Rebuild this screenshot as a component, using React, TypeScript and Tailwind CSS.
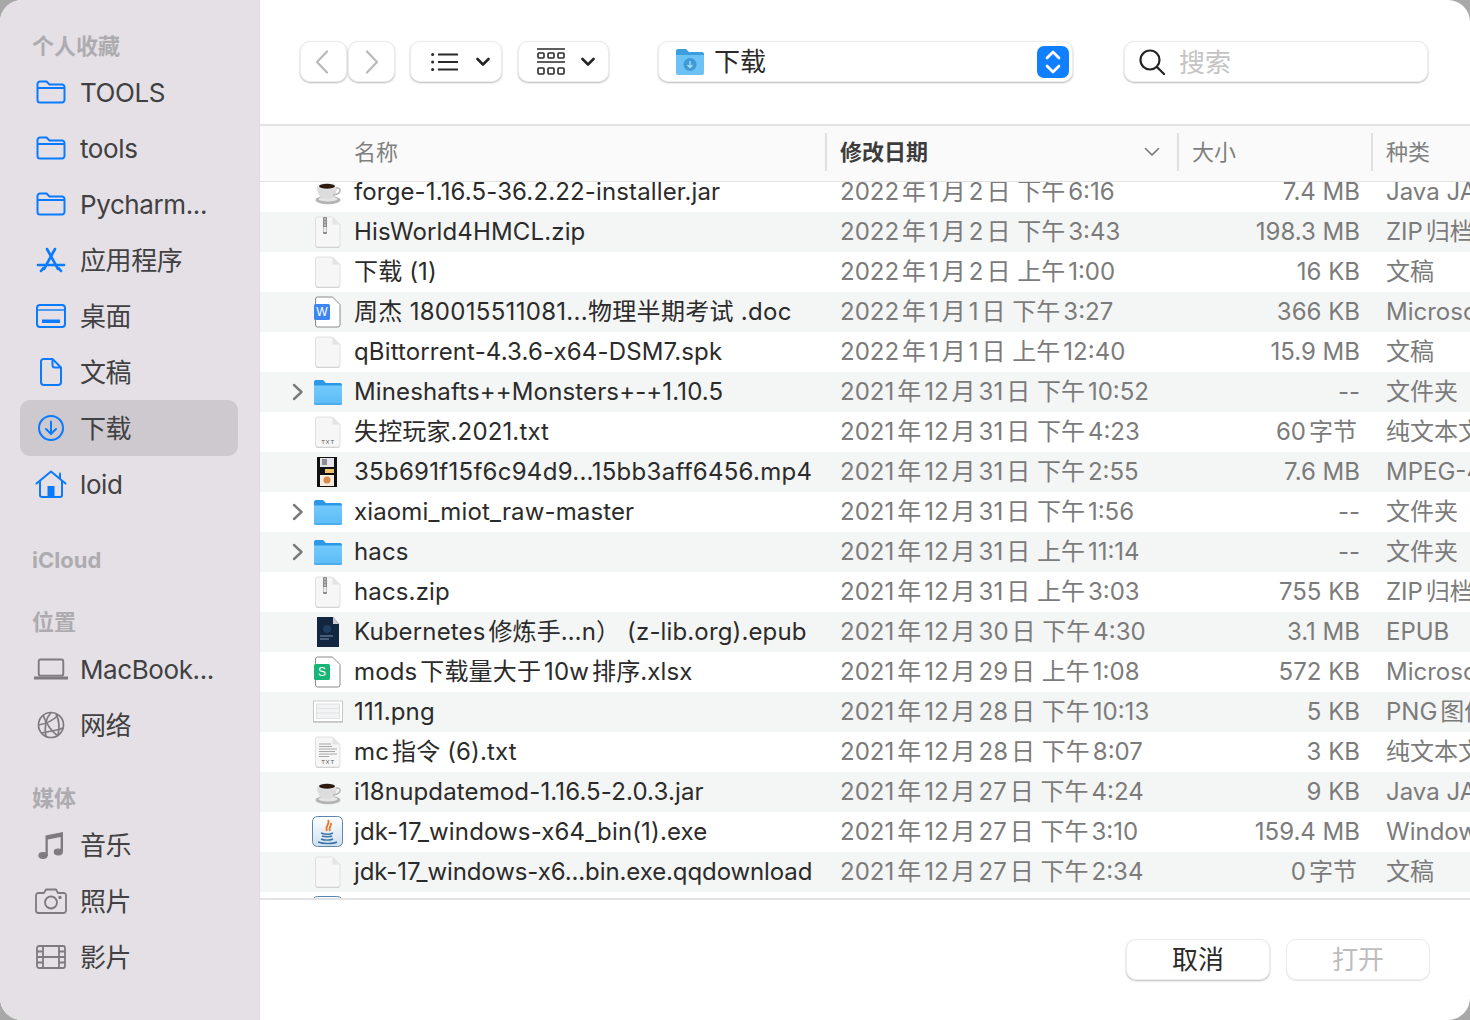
import type { ReactNode } from 'react';

const BLUE = '#0a7aff';
const GRAY = '#7d7b7f';

type IconProps = { color: string };

const FolderLine = ({ color }: IconProps) => (
  <svg width="30" height="24" viewBox="0 0 30 24" fill="none" stroke={color} strokeWidth="2" strokeLinejoin="round">
    <path d="M1.500 20V4a2.500 2.500 0 0 1 2.500-2.500h6.500l3 3H26a2.500 2.500 0 0 1 2.500 2.500v13a2.500 2.500 0 0 1-2.500 2.500H4A2.500 2.500 0 0 1 1.500 20z" />
    <path d="M1.500 8h27" />
  </svg>
);

const AppsIcon = ({ color }: IconProps) => (
  <svg width="30" height="26" viewBox="0 0 30 26" fill="none" stroke={color} strokeWidth="2.600" strokeLinecap="round">
    <path d="M11 2l11 20" />
    <path d="M19 2L8 22" />
    <path d="M2 18h26" />
    <path d="M5 24l2-2.500" />
    <path d="M25 24l-2-2.500" />
  </svg>
);

const DesktopIcon = ({ color }: IconProps) => (
  <svg width="30" height="24" viewBox="0 0 30 24" fill="none" stroke={color} strokeWidth="2">
    <rect x="1" y="1" width="28" height="22" rx="3" />
    <path d="M1 6h28" strokeWidth="1.400" />
    <rect x="6" y="15.500" width="18" height="3.500" fill={color} stroke="none" />
  </svg>
);

const DocLine = ({ color }: IconProps) => (
  <svg width="22" height="28" viewBox="0 0 22 28" fill="none" stroke={color} strokeWidth="2" strokeLinejoin="round">
    <path d="M3.500 1h9L21 9.500V24a3 3 0 0 1-3 3H4a3 3 0 0 1-3-3V3.500A2.500 2.500 0 0 1 3.500 1z" />
    <path d="M12.500 1v6a2.500 2.500 0 0 0 2.500 2.500h6" />
  </svg>
);

const DownloadIcon = ({ color }: IconProps) => (
  <svg width="28" height="28" viewBox="0 0 28 28" fill="none" stroke={color} strokeWidth="2" strokeLinecap="round" strokeLinejoin="round">
    <circle cx="14" cy="14" r="12" />
    <path d="M14 7.500v12" />
    <path d="M9 15l5 5 5-5" />
  </svg>
);

const HomeIcon = ({ color }: IconProps) => (
  <svg width="32" height="28" viewBox="0 0 32 28" fill="none" stroke={color} strokeWidth="2" strokeLinecap="round" strokeLinejoin="round">
    <path d="M1.500 13.500L16 1.500l14.500 12" />
    <path d="M5 11v14a2 2 0 0 0 2 2h18a2 2 0 0 0 2-2V11" />
    <path d="M25 3.500V8" />
    <rect x="12.500" y="16" width="7" height="11" fill={color} stroke="none" />
  </svg>
);

const LaptopIcon = ({ color }: IconProps) => (
  <svg width="36" height="22" viewBox="0 0 36 22" fill="none" stroke={color} strokeWidth="2">
    <rect x="5" y="1" width="26" height="17" rx="2" />
    <path d="M0 20.500h36" strokeWidth="3" strokeLinecap="round" />
  </svg>
);

const GlobeIcon = ({ color }: IconProps) => (
  <svg width="28" height="28" viewBox="0 0 28 28" fill="none" stroke={color} strokeWidth="1.700">
    <circle cx="14" cy="14" r="12.500" />
    <path d="M6 4c3 8 8 16 15 21" />
    <path d="M14 1.500C9 7 7 15 9 26" />
    <path d="M1.500 14c7-1 15-5 20-10" />
    <path d="M5 22c7-2 14-2 21-5" />
    <path d="M19 3c3 6 4 13 2 21" />
  </svg>
);

const MusicIcon = ({ color }: IconProps) => (
  <svg width="26" height="28" viewBox="0 0 26 28" fill={color}>
    <path d="M7.500 4.500L25 1v20h-2.400V6L9.800 8.600V25H7.500z" />
    <ellipse cx="5" cy="24.500" rx="4.600" ry="3.400" />
    <ellipse cx="20.300" cy="21" rx="4.600" ry="3.400" />
  </svg>
);

const CameraIcon = ({ color }: IconProps) => (
  <svg width="32" height="26" viewBox="0 0 32 26" fill="none" stroke={color} strokeWidth="1.800" strokeLinejoin="round">
    <path d="M3.500 5H9l2-3.500h10L23 5h5.500A2.500 2.500 0 0 1 31 7.500v15a2.500 2.500 0 0 1-2.500 2.500h-25A2.500 2.500 0 0 1 1 22.500v-15A2.500 2.500 0 0 1 3.500 5z" />
    <circle cx="16" cy="14.500" r="6" />
    <circle cx="25" cy="9.500" r="0.800" fill={color} />
  </svg>
);

const FilmIcon = ({ color }: IconProps) => (
  <svg width="30" height="24" viewBox="0 0 30 24" fill="none" stroke={color} strokeWidth="1.800">
    <rect x="1" y="1" width="28" height="22" rx="2" />
    <path d="M7 1v22M23 1v22M7 12h16M1 6.500h6M1 12h6M1 17.500h6M23 6.500h6M23 12h6M23 17.500h6" />
  </svg>
);

const sections: { title: string; gap: string; titleGap: string; items: { label: string; icon: ReactNode; active?: boolean }[] }[] = [
  {
    title: '个人收藏',
    gap: 'mt-0',
    titleGap: 'mb-[1px]',
    items: [
      { label: 'TOOLS', icon: <FolderLine color={BLUE} /> },
      { label: 'tools', icon: <FolderLine color={BLUE} /> },
      { label: 'Pycharm...', icon: <FolderLine color={BLUE} /> },
      { label: '应用程序', icon: <AppsIcon color={BLUE} /> },
      { label: '桌面', icon: <DesktopIcon color={BLUE} /> },
      { label: '文稿', icon: <DocLine color={BLUE} /> },
      { label: '下载', icon: <DownloadIcon color={BLUE} />, active: true },
      { label: 'loid', icon: <HomeIcon color={BLUE} /> },
    ],
  },
  { title: 'iCloud', gap: 'mt-[31px]', titleGap: 'mb-0', items: [] },
  {
    title: '位置',
    gap: 'mt-[28px]',
    titleGap: 'mb-[2px]',
    items: [
      { label: 'MacBook...', icon: <LaptopIcon color={GRAY} /> },
      { label: '网络', icon: <GlobeIcon color={GRAY} /> },
    ],
  },
  {
    title: '媒体',
    gap: 'mt-[28px]',
    titleGap: 'mb-[2px]',
    items: [
      { label: '音乐', icon: <MusicIcon color={GRAY} /> },
      { label: '照片', icon: <CameraIcon color={GRAY} /> },
      { label: '影片', icon: <FilmIcon color={GRAY} /> },
    ],
  },
  { title: '标记', gap: 'mt-[30px]', titleGap: 'mb-0', items: [] },
];

const Sidebar = () => (
  <aside className="w-[260px] shrink-0 h-full overflow-hidden bg-[#e4e0e5] border-r border-[#dcdadd] pt-[29px]">
    {sections.map((s) => (
      <div key={s.title} className={s.gap}>
        <div className={`${s.titleGap} h-[34px] pl-[32px] flex items-center text-[22px] font-bold text-[#aeabb0]`}>{s.title}</div>
        {s.items.map((item) => (
          <div
            key={item.label}
            className={`h-[56px] mx-[20px] w-[218px] rounded-[10px] flex items-center text-[26px] tracking-[-0.4px] text-[#414042] ${
              item.active ? 'bg-[#cdc9ce]' : ''
            }`}
          >
            <span className="w-[60px] pl-[14px] pr-[12px] shrink-0 flex justify-center">{item.icon}</span>
            <span className="whitespace-nowrap">{item.label}</span>
          </div>
        ))}
      </div>
    ))}
  </aside>
);

const btn = 'h-[41px] bg-white rounded-[10px] border border-[#ececec] shadow-[0_1px_2px_rgba(0,0,0,0.28)] flex items-center';

const SmallChevron = () => (
  <svg width="14" height="10" viewBox="0 0 14 10" fill="none" stroke="#262626" strokeWidth="2.600" strokeLinecap="round" strokeLinejoin="round">
    <path d="M1.500 2l5.500 5.500L12.500 2" />
  </svg>
);

const Toolbar = () => (
  <div className="h-[124px] shrink-0 flex items-start pt-[41px] pl-[40px]">
    <div className={`${btn} w-[47px] justify-center pr-[3px]`}>
      <svg width="14" height="24" viewBox="0 0 14 24" fill="none" stroke="#b9b9b9" strokeWidth="2.200" strokeLinecap="round" strokeLinejoin="round">
        <path d="M12 1.500L2 12l10 10.500" />
      </svg>
    </div>
    <div className={`${btn} w-[47px] justify-center ml-[1px]`}>
      <svg width="14" height="24" viewBox="0 0 14 24" fill="none" stroke="#b9b9b9" strokeWidth="2.200" strokeLinecap="round" strokeLinejoin="round">
        <path d="M2 1.500L12 12 2 22.500" />
      </svg>
    </div>
    <div className={`${btn} w-[92px] ml-[15px] pl-[20px] gap-[17px]`}>
      <svg width="28" height="20" viewBox="0 0 28 20" fill="none" stroke="#2a2a2a" strokeWidth="1.800">
        <path d="M7 2.500h20M7 10h20M7 17.500h20" />
        <circle cx="1.600" cy="2.500" r="1.500" fill="#2a2a2a" stroke="none" />
        <circle cx="1.600" cy="10" r="1.500" fill="#2a2a2a" stroke="none" />
        <circle cx="1.600" cy="17.500" r="1.500" fill="#2a2a2a" stroke="none" />
      </svg>
      <SmallChevron />
    </div>
    <div className={`${btn} w-[91px] ml-[16px] pl-[18px] gap-[16px]`}>
      <svg width="28" height="27" viewBox="0 0 28 27" fill="none" stroke="#2a2a2a" strokeWidth="1.600">
        <path d="M0 1h28M0 14h28" />
        <rect x="1" y="5" width="6" height="5" rx="1" />
        <rect x="11" y="5" width="6" height="5" rx="1" />
        <rect x="21" y="5" width="6" height="5" rx="1" />
        <rect x="1" y="20" width="6" height="6" rx="1" />
        <rect x="11" y="20" width="6" height="6" rx="1" />
        <rect x="21" y="20" width="6" height="6" rx="1" />
      </svg>
      <SmallChevron />
    </div>
    <div className={`${btn} w-[415px] ml-[49px] pl-[16px] pr-[3px]`}>
      <svg width="30" height="30" viewBox="0 0 30 30">
        <path d="M1 4a2 2 0 0 1 2-2h8l3 3h13a2 2 0 0 1 2 2v3H1z" fill="#3b9fdf" />
        <path d="M1 8h28v18a2 2 0 0 1-2 2H3a2 2 0 0 1-2-2z" fill="#6cc1f5" />
        <circle cx="15" cy="17.500" r="6.500" fill="#3f9ad6" />
        <path d="M15 14v6M12.500 18l2.500 2.500 2.500-2.500" fill="none" stroke="#a5dcfa" strokeWidth="1.400" />
      </svg>
      <span className="ml-[9px] text-[26px] text-[#2a2a2a]">下载</span>
      <span className="ml-auto w-[32px] h-[32px] rounded-[7px] bg-[#0f7fff] flex items-center justify-center">
        <svg width="16" height="26" viewBox="0 0 16 26" fill="none" stroke="white" strokeWidth="2.800" strokeLinecap="round" strokeLinejoin="round">
          <path d="M2 9l6-6 6 6M2 17l6 6 6-6" />
        </svg>
      </span>
    </div>
    <div className={`${btn} w-[304px] ml-[51px] pl-[14px] gap-[14px] shadow-[0_1px_1px_rgba(0,0,0,0.3)]`}>
      <svg width="26" height="26" viewBox="0 0 26 26" fill="none" stroke="#232323" strokeWidth="2.200" strokeLinecap="round">
        <circle cx="11" cy="11" r="9.500" />
        <path d="M18 18l7 7" />
      </svg>
      <span className="text-[26px] text-[#c4c4c4] pt-[1px]">搜索</span>
    </div>
  </div>
);

const cols = 'grid grid-cols-[565px_352px_194px_99px]';

const Header = () => (
  <div className={`${cols} h-[58px] shrink-0 pb-[3px] bg-[#fafafa] border-t-2 border-b border-[#e3e3e3] text-[22px] text-[#808080]`}>
    <div className="pl-[94px] flex items-center">名称</div>
    <div className="relative flex items-center pl-[13px] pr-[17px] my-[7px] border-l-2 border-[#e0e0e0] justify-between font-bold text-[#3d3d3d]">
      修改日期
      <svg width="16" height="10" viewBox="0 0 16 10" fill="none" stroke="#777" strokeWidth="1.600" strokeLinecap="round" strokeLinejoin="round">
        <path d="M1.500 1.500L8 8l6.500-6.500" />
      </svg>
    </div>
    <div className="flex items-center pl-[13px] my-[7px] border-l-2 border-[#e0e0e0]">大小</div>
    <div className="flex items-center pl-[13px] my-[7px] border-l-2 border-[#e0e0e0] whitespace-nowrap">种类</div>
  </div>
);

const pagePath = 'M9.500 5h15L32 12.500V33a2 2 0 0 1-2 2H9.500a2 2 0 0 1-2-2V7a2 2 0 0 1 2-2z';

const Page = ({ fill = '#f6f6f6', stroke = '#dcdcdc', children }: { fill?: string; stroke?: string; children?: ReactNode }) => (
  <svg width="40" height="40" viewBox="0 0 40 40">
    <path d={pagePath} transform="translate(0 0.800)" fill="#bdbdbd" />
    <path d={pagePath} fill={fill} stroke={stroke} strokeWidth="0.800" />
    <path d="M24.500 5v7.500H32z" fill="#e4e4e4" />
    {children}
  </svg>
);

const ZipIcon = () => (
  <Page>
    <rect x="15" y="5" width="4" height="17" rx="1" fill="#8c8c8c" />
    <path d="M16 7h2M16 10h2M16 13h2" stroke="#ddd" strokeWidth="1" />
    <rect x="15.500" y="15" width="3" height="5" fill="#efefef" />
  </Page>
);

const BadgeDoc = ({ color, letter }: { color: string; letter: string }) => (
  <svg width="40" height="40" viewBox="0 0 40 40">
    <path d={pagePath} fill="#fff" stroke="#8a8a8a" strokeWidth="1" />
    <rect x="6" y="12" width="16" height="16" rx="1.500" fill={color} />
    <text x="14" y="24" textAnchor="middle" fontSize="12" fontFamily="Liberation Sans, sans-serif" fill="#fff">{letter}</text>
  </svg>
);

const TxtIcon = ({ lines }: { lines?: boolean }) => (
  <Page>
    {lines && <path d="M11 12h12M11 14.500h13M11 17h18M11 19.500h16M11 22h18M11 24.500h10" stroke="#a8a8a8" strokeWidth="1" />}
    <text x="20" y="32" textAnchor="middle" fontSize="6" letterSpacing="0.800" fontFamily="Liberation Sans, sans-serif" fill="#555">TXT</text>
  </Page>
);

const FolderFill = () => (
  <svg width="40" height="40" viewBox="0 0 40 40">
    <defs>
      <linearGradient id="folderBody" x1="0" y1="0" x2="0" y2="1">
        <stop offset="0" stopColor="#72cafc" />
        <stop offset="1" stopColor="#5cbbf6" />
      </linearGradient>
    </defs>
    <path d="M6 10a2 2 0 0 1 2-2h7l3 3h14a2 2 0 0 1 2 2v3H6z" fill="#2b97e6" />
    <path d="M6 13.500h28V31a2 2 0 0 1-2 2H8a2 2 0 0 1-2-2z" fill="url(#folderBody)" />
    <path d="M6 32h28" stroke="#3f9fdf" strokeWidth="1" />
  </svg>
);

const Coffee = () => (
  <svg width="40" height="40" viewBox="0 0 40 40">
    <ellipse cx="20" cy="28" rx="12.500" ry="4.200" fill="#b4b4b4" />
    <ellipse cx="20" cy="27" rx="9.500" ry="2.600" fill="#e5e5e5" />
    <path d="M9 14c0 8 3 13 10 13s10-5 10-13z" fill="#dcdcdc" />
    <path d="M28 16c6-1 6 6-3 7" fill="none" stroke="#b8b8b8" strokeWidth="1.500" />
    <ellipse cx="19" cy="14" rx="10" ry="3.400" fill="#f2f2f2" />
    <ellipse cx="19" cy="14.300" rx="8" ry="2.500" fill="#2c1b10" />
  </svg>
);

const VideoIcon = () => (
  <svg width="40" height="40" viewBox="0 0 40 40">
    <rect x="9" y="5" width="20" height="30" fill="#111" />
    <rect x="12" y="6" width="14" height="9" fill="#e6e4ea" />
    <rect x="14" y="7" width="5" height="6" fill="#8b8b97" />
    <rect x="17" y="17" width="9" height="4" fill="#f0c46a" />
    <rect x="12" y="23" width="14" height="11" fill="#f6ece0" />
    <circle cx="19" cy="28" r="3.500" fill="#d98a4b" />
  </svg>
);

const EpubIcon = () => (
  <svg width="40" height="40" viewBox="0 0 40 40">
    <path d="M9 5h16l6 7v23H9z" fill="#12263f" />
    <path d="M25 5v7h6z" fill="#c9ced6" />
    <path d="M12 24h13M12 27h9" stroke="#7f96b3" strokeWidth="1" />
    <circle cx="19" cy="17" r="4" fill="#1d3f63" />
  </svg>
);

const PngIcon = () => (
  <svg width="40" height="40" viewBox="0 0 40 40">
    <rect x="5" y="9.500" width="30" height="21" fill="#a9a9a9" />
    <rect x="5.500" y="9" width="29" height="20.500" fill="#fff" stroke="#c4c4c4" strokeWidth="0.800" />
    <rect x="8.500" y="12" width="23" height="14.500" fill="#f2f3f4" stroke="#cfcfcf" strokeWidth="0.600" />
    <path d="M9 16.500h22M9 21h22" stroke="#dedede" strokeWidth="0.800" />
  </svg>
);

const JavaIcon = () => (
  <svg width="40" height="40" viewBox="0 0 40 40">
    <defs>
      <linearGradient id="javaBg" x1="0" y1="0" x2="0" y2="1">
        <stop offset="0" stopColor="#ffffff" />
        <stop offset="1" stopColor="#cfe0ee" />
      </linearGradient>
    </defs>
    <rect x="4.500" y="4.500" width="30" height="30" rx="5" fill="url(#javaBg)" stroke="#5a86ad" strokeWidth="1" />
    <path d="M20 8c3 4-4 6-1 11M23 11c1 3-3 4-1 8" fill="none" stroke="#e8762d" strokeWidth="1.800" />
    <path d="M13 21c4 1.500 9 1.500 12 0M14 24c3 1 8 1 10 0M13 27c3 1.500 9 1.500 12 0M10 30c5 2 15 2 19 0" fill="none" stroke="#3d74a6" strokeWidth="1.400" />
  </svg>
);

const doc = <Page />;
const zip = <ZipIcon />;
const folder = <FolderFill />;

const rows: { icon: ReactNode; name: string; date: string; size: string; kind: string; expand?: boolean; nameClass?: string }[] = [
  { icon: <Coffee />, name: 'forge-1.16.5-36.2.22-installer.jar', date: '2022年1月2日 下午6:16', size: '7.4 MB', kind: 'Java JAR' },
  { icon: zip, name: 'HisWorld4HMCL.zip', date: '2022年1月2日 下午3:43', size: '198.3 MB', kind: 'ZIP归档' },
  { icon: doc, name: '下载 (1)', date: '2022年1月2日 上午1:00', size: '16 KB', kind: '文稿' },
  { icon: <BadgeDoc color="#3d86f0" letter="W" />, name: '周杰 180015511081...物理半期考试 .doc', date: '2022年1月1日 下午3:27', size: '366 KB', kind: 'Microsoft', nameClass: 'tracking-[0.3px]' },
  { icon: doc, name: 'qBittorrent-4.3.6-x64-DSM7.spk', date: '2022年1月1日 上午12:40', size: '15.9 MB', kind: '文稿' },
  { icon: folder, name: 'Mineshafts++Monsters+-+1.10.5', date: '2021年12月31日 下午10:52', size: '--', kind: '文件夹', expand: true },
  { icon: <TxtIcon />, name: '失控玩家.2021.txt', date: '2021年12月31日 下午4:23', size: '60字节', kind: '纯文本文稿' },
  { icon: <VideoIcon />, name: '35b691f15f6c94d9...15bb3aff6456.mp4', date: '2021年12月31日 下午2:55', size: '7.6 MB', kind: 'MPEG-4', nameClass: 'tracking-[0.28px]' },
  { icon: folder, name: 'xiaomi_miot_raw-master', date: '2021年12月31日 下午1:56', size: '--', kind: '文件夹', expand: true },
  { icon: folder, name: 'hacs', date: '2021年12月31日 上午11:14', size: '--', kind: '文件夹', expand: true },
  { icon: zip, name: 'hacs.zip', date: '2021年12月31日 上午3:03', size: '755 KB', kind: 'ZIP归档' },
  { icon: <EpubIcon />, name: 'Kubernetes修炼手…n） (z-lib.org).epub', date: '2021年12月30日 下午4:30', size: '3.1 MB', kind: 'EPUB' },
  { icon: <BadgeDoc color="#19b576" letter="S" />, name: 'mods下载量大于10w排序.xlsx', date: '2021年12月29日 上午1:08', size: '572 KB', kind: 'Microsoft' },
  { icon: <PngIcon />, name: '111.png', date: '2021年12月28日 下午10:13', size: '5 KB', kind: 'PNG图像' },
  { icon: <TxtIcon lines />, name: 'mc指令 (6).txt', date: '2021年12月28日 下午8:07', size: '3 KB', kind: '纯文本文稿' },
  { icon: <Coffee />, name: 'i18nupdatemod-1.16.5-2.0.3.jar', date: '2021年12月27日 下午4:24', size: '9 KB', kind: 'Java JAR' },
  { icon: <JavaIcon />, name: 'jdk-17_windows-x64_bin(1).exe', date: '2021年12月27日 下午3:10', size: '159.4 MB', kind: 'Windows' },
  { icon: doc, name: 'jdk-17_windows-x6...bin.exe.qqdownload', date: '2021年12月27日 下午2:34', size: '0字节', kind: '文稿', nameClass: 'tracking-[-0.1px]' },
  { icon: <JavaIcon />, name: '', date: '', size: '', kind: '' },
];

const FileList = () => (
  <div className="flex-1 min-h-0 overflow-hidden">
    <div className="-mt-[10px]">
      {rows.map((r, i) => (
        <div
          key={i}
          className={`${cols} h-[40px] items-center text-[24px] text-[#7b7b7b] whitespace-nowrap [text-autospace:normal] ${
            i % 2 === 1 ? 'bg-[#f4f5f5]' : 'bg-white'
          }`}
        >
          <div className="pl-[30px] flex items-center text-[#2b2b2b]">
            <span className="w-[18px] h-[40px] pl-[2px] shrink-0 flex items-center">
              {r.expand && (
                <svg width="12" height="18" viewBox="0 0 12 18" fill="none" stroke="#7a7a7a" strokeWidth="2.400" strokeLinecap="round" strokeLinejoin="round">
                  <path d="M2 2l7.500 7L2 16" />
                </svg>
              )}
            </span>
            <span className="w-[40px] h-[40px] shrink-0">{r.icon}</span>
            <span className={`ml-[6px] ${r.nameClass ?? 'tracking-[0.14px]'}`}>{r.name}</span>
          </div>
          <div className="pl-[15px]">{r.date}</div>
          <div className={`${r.size.endsWith('字节') ? 'pr-[14px]' : 'pr-[11px]'} text-right`}>{r.size}</div>
          <div className="pl-[15px] overflow-hidden">{r.kind}</div>
        </div>
      ))}
    </div>
  </div>
);

const Footer = () => (
  <div className="h-[122px] shrink-0 border-t-2 border-[#e3e3e3] flex justify-end gap-[16px] pt-[39px] pr-[40px] text-[26px]">
    <div className={`${btn} w-[144px] justify-center text-[#2a2a2a]`}>取消</div>
    <div className="h-[41px] w-[144px] rounded-[10px] bg-white border border-[#ececec] shadow-[0_1px_1px_rgba(0,0,0,0.1)] flex items-center justify-center text-[#bdbdbd]">打开</div>
  </div>
);

export default function App() {
  return (
    <div className="w-[1470px] h-[1020px] overflow-hidden bg-[#a8a8a8] font-['Inter','Noto_Sans_CJK_SC',sans-serif]">
      <div className="w-full h-full flex rounded-[22px] overflow-hidden bg-white">
        <Sidebar />
        <main className="flex-1 min-w-0 flex flex-col">
          <Toolbar />
          <Header />
          <FileList />
          <Footer />
        </main>
      </div>
    </div>
  );
}
